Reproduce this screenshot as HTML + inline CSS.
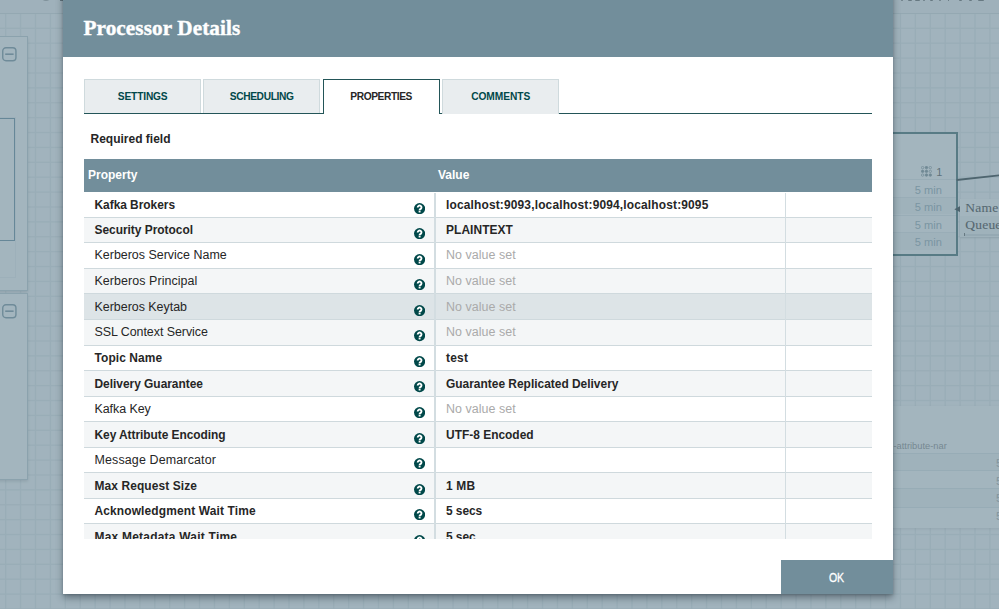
<!DOCTYPE html>
<html><head><meta charset="utf-8">
<style>
*{margin:0;padding:0;box-sizing:border-box}
html,body{width:999px;height:609px;overflow:hidden}
body{position:relative;background:#f9fafb;font-family:"Liberation Sans",sans-serif}
/* background canvas */
#canvas{position:absolute;left:0;top:0;width:999px;height:609px;overflow:hidden}
#grid{position:absolute;left:0;top:0;width:999px;height:609px;
 background-image:linear-gradient(to right, #e3e8eb 1.4px, transparent 1.4px),linear-gradient(to bottom, #e3e8eb 1.4px, transparent 1.4px);
 background-size:14.9px 14.9px;background-position:5.0px 13.0px}
#topbar{position:absolute;left:0;top:0;width:999px;height:13.9px;background:#f2f4f5;border-bottom:1px solid #d3dadd}
#toptext{position:absolute;left:897px;top:-14.5px;font-size:15px;color:#333;letter-spacing:2.6px;white-space:nowrap}
.panel{position:absolute;background:#fff;border:1.2px solid #b9c8cf;box-shadow:0 1.5px 3px rgba(0,0,0,.2)}
.minus{position:absolute;left:2.5px;width:14.8px;height:14.5px;border:2px solid #6c8896;border-radius:3.5px}
.minus:after{content:"";position:absolute;left:2px;right:2px;top:4.6px;height:1.8px;background:#5f7d8b}
#bird{position:absolute;left:-5px;top:117.4px;width:20.5px;height:161px;border:1px solid #eef1f2}
#birdv{position:absolute;left:-5px;top:118.4px;width:19.9px;height:122.6px;border:1.2px solid #527c92;border-left:none}
#pg{position:absolute;left:800px;top:131.8px;width:157.6px;height:124.6px;background:#fff;border:2px solid #285a5c}
.pgrow{position:absolute;left:0;width:154px;height:17.6px;border-top:1px solid #e3e8eb;font-size:11.1px;color:#8aa4ae;text-align:right;padding-right:14.2px;line-height:18.6px}
#pgicon{position:absolute;left:920.5px;top:165.8px}
#pg1{position:absolute;left:936.3px;top:165.6px;font-size:11px;color:#3a3a3a}
#conn{position:absolute;left:0;top:0}
#lbl{position:absolute;left:959.5px;top:198.8px;width:60px;height:37.8px;background:#fff;box-shadow:0 1px 2px rgba(0,0,0,.2)}
.lt{position:absolute;left:5.8px;font-family:"Liberation Serif",serif;font-size:13.5px;color:#1a1a1a;white-space:nowrap;-webkit-text-stroke:0.12px #262626;letter-spacing:0.2px}
#proc{position:absolute;left:860px;top:406.4px;width:160px;height:121.2px;background:#fff;box-shadow:0 1px 3px rgba(0,0,0,.15)}
.prow{position:absolute;left:0;width:160px;border-top:1px solid #dde4e7}
#glass{position:absolute;left:0;top:0;width:999px;height:609px;background:rgba(114,142,155,.65)}
/* dialog */
#dlg{position:absolute;left:63px;top:-10px;width:830.3px;height:603.8px;background:#fff;box-shadow:0 4px 7px rgba(20,32,40,.42), 0 1px 2px rgba(20,32,40,.15)}
#hdr{position:absolute;left:63px;top:0;width:830.3px;height:57.3px;background:#728e9b}
#title{position:absolute;left:83.5px;top:16px;font-family:"Liberation Serif",serif;font-weight:bold;font-size:21.2px;color:#fff;white-space:nowrap;-webkit-text-stroke:0.4px #fff;letter-spacing:0.1px}
.tab{position:absolute;top:79px;height:34.5px;width:117.3px;background:#e9edef;border:1px solid #cfdadd;border-bottom:none;color:#004849;font-weight:bold;font-size:10.2px;text-align:center;line-height:33px}
.tab.sel{background:#fff;border:1.5px solid #235558;border-bottom:none;color:#262626;height:35px}
#tabline{position:absolute;left:84px;top:112.5px;width:788px;height:1.5px;background:#235558}
#req{position:absolute;left:90.5px;top:132px;font-weight:bold;font-size:12px;color:#262626;white-space:nowrap}
#thead{position:absolute;left:84px;top:158.7px;width:788px;height:34.2px;background:#728e9b;color:#fff;font-weight:bold;font-size:12px}
#thead span{position:absolute;top:9.5px}
#tbody{position:absolute;left:84px;top:192.3px;width:788px;height:346.3px;overflow:hidden}
.row{position:absolute;left:0;width:788px;height:25.55px;background:#fff;border-bottom:1px solid #cfd9dd}
.row.alt{background:#f4f6f7}
.row.hov{background:#dde4e7}
.pn,.pv{position:absolute;top:5.1px;font-size:12.45px;color:#262626;white-space:nowrap}
.pn{left:10.5px}
.pv{left:362px}
.b{font-weight:bold;font-size:11.95px;top:5.5px}
.nv{color:#aaa}
.q{position:absolute}
#col1{position:absolute;left:434.4px;top:192.8px;width:1.3px;height:345.8px;background:#d3dde1}
#col2{position:absolute;left:785px;top:192.8px;width:1.3px;height:345.8px;background:#d3dde1}
#ok{position:absolute;left:781px;top:560px;width:112.3px;height:33.8px;background:#728e9b;color:#fff;font-size:12px;letter-spacing:-0.3px;text-align:center;line-height:35px;-webkit-text-stroke:0.3px #fff}
</style></head><body>
<div id="canvas">
<svg id="gridsvg" width="999" height="609" style="position:absolute;left:0;top:0"><rect x="4.96" y="0" width="1.4" height="609" fill="#e3e8eb"/><rect x="19.87" y="0" width="1.4" height="609" fill="#e3e8eb"/><rect x="34.79" y="0" width="1.4" height="609" fill="#e3e8eb"/><rect x="49.70" y="0" width="1.4" height="609" fill="#e3e8eb"/><rect x="64.61" y="0" width="1.4" height="609" fill="#e3e8eb"/><rect x="79.52" y="0" width="1.4" height="609" fill="#e3e8eb"/><rect x="94.44" y="0" width="1.4" height="609" fill="#e3e8eb"/><rect x="109.35" y="0" width="1.4" height="609" fill="#e3e8eb"/><rect x="124.26" y="0" width="1.4" height="609" fill="#e3e8eb"/><rect x="139.18" y="0" width="1.4" height="609" fill="#e3e8eb"/><rect x="154.09" y="0" width="1.4" height="609" fill="#e3e8eb"/><rect x="169.00" y="0" width="1.4" height="609" fill="#e3e8eb"/><rect x="183.92" y="0" width="1.4" height="609" fill="#e3e8eb"/><rect x="198.83" y="0" width="1.4" height="609" fill="#e3e8eb"/><rect x="213.74" y="0" width="1.4" height="609" fill="#e3e8eb"/><rect x="228.66" y="0" width="1.4" height="609" fill="#e3e8eb"/><rect x="243.57" y="0" width="1.4" height="609" fill="#e3e8eb"/><rect x="258.48" y="0" width="1.4" height="609" fill="#e3e8eb"/><rect x="273.39" y="0" width="1.4" height="609" fill="#e3e8eb"/><rect x="288.31" y="0" width="1.4" height="609" fill="#e3e8eb"/><rect x="303.22" y="0" width="1.4" height="609" fill="#e3e8eb"/><rect x="318.13" y="0" width="1.4" height="609" fill="#e3e8eb"/><rect x="333.05" y="0" width="1.4" height="609" fill="#e3e8eb"/><rect x="347.96" y="0" width="1.4" height="609" fill="#e3e8eb"/><rect x="362.87" y="0" width="1.4" height="609" fill="#e3e8eb"/><rect x="377.79" y="0" width="1.4" height="609" fill="#e3e8eb"/><rect x="392.70" y="0" width="1.4" height="609" fill="#e3e8eb"/><rect x="407.61" y="0" width="1.4" height="609" fill="#e3e8eb"/><rect x="422.52" y="0" width="1.4" height="609" fill="#e3e8eb"/><rect x="437.44" y="0" width="1.4" height="609" fill="#e3e8eb"/><rect x="452.35" y="0" width="1.4" height="609" fill="#e3e8eb"/><rect x="467.26" y="0" width="1.4" height="609" fill="#e3e8eb"/><rect x="482.18" y="0" width="1.4" height="609" fill="#e3e8eb"/><rect x="497.09" y="0" width="1.4" height="609" fill="#e3e8eb"/><rect x="512.00" y="0" width="1.4" height="609" fill="#e3e8eb"/><rect x="526.91" y="0" width="1.4" height="609" fill="#e3e8eb"/><rect x="541.83" y="0" width="1.4" height="609" fill="#e3e8eb"/><rect x="556.74" y="0" width="1.4" height="609" fill="#e3e8eb"/><rect x="571.65" y="0" width="1.4" height="609" fill="#e3e8eb"/><rect x="586.57" y="0" width="1.4" height="609" fill="#e3e8eb"/><rect x="601.48" y="0" width="1.4" height="609" fill="#e3e8eb"/><rect x="616.39" y="0" width="1.4" height="609" fill="#e3e8eb"/><rect x="631.31" y="0" width="1.4" height="609" fill="#e3e8eb"/><rect x="646.22" y="0" width="1.4" height="609" fill="#e3e8eb"/><rect x="661.13" y="0" width="1.4" height="609" fill="#e3e8eb"/><rect x="676.04" y="0" width="1.4" height="609" fill="#e3e8eb"/><rect x="690.96" y="0" width="1.4" height="609" fill="#e3e8eb"/><rect x="705.87" y="0" width="1.4" height="609" fill="#e3e8eb"/><rect x="720.78" y="0" width="1.4" height="609" fill="#e3e8eb"/><rect x="735.70" y="0" width="1.4" height="609" fill="#e3e8eb"/><rect x="750.61" y="0" width="1.4" height="609" fill="#e3e8eb"/><rect x="765.52" y="0" width="1.4" height="609" fill="#e3e8eb"/><rect x="780.44" y="0" width="1.4" height="609" fill="#e3e8eb"/><rect x="795.35" y="0" width="1.4" height="609" fill="#e3e8eb"/><rect x="810.26" y="0" width="1.4" height="609" fill="#e3e8eb"/><rect x="825.17" y="0" width="1.4" height="609" fill="#e3e8eb"/><rect x="840.09" y="0" width="1.4" height="609" fill="#e3e8eb"/><rect x="855.00" y="0" width="1.4" height="609" fill="#e3e8eb"/><rect x="869.91" y="0" width="1.4" height="609" fill="#e3e8eb"/><rect x="884.83" y="0" width="1.4" height="609" fill="#e3e8eb"/><rect x="899.74" y="0" width="1.4" height="609" fill="#e3e8eb"/><rect x="914.65" y="0" width="1.4" height="609" fill="#e3e8eb"/><rect x="929.57" y="0" width="1.4" height="609" fill="#e3e8eb"/><rect x="944.48" y="0" width="1.4" height="609" fill="#e3e8eb"/><rect x="959.39" y="0" width="1.4" height="609" fill="#e3e8eb"/><rect x="974.30" y="0" width="1.4" height="609" fill="#e3e8eb"/><rect x="989.22" y="0" width="1.4" height="609" fill="#e3e8eb"/><rect x="0" y="12.72" width="999" height="1.4" fill="#e3e8eb"/><rect x="0" y="27.61" width="999" height="1.4" fill="#e3e8eb"/><rect x="0" y="42.50" width="999" height="1.4" fill="#e3e8eb"/><rect x="0" y="57.39" width="999" height="1.4" fill="#e3e8eb"/><rect x="0" y="72.28" width="999" height="1.4" fill="#e3e8eb"/><rect x="0" y="87.16" width="999" height="1.4" fill="#e3e8eb"/><rect x="0" y="102.05" width="999" height="1.4" fill="#e3e8eb"/><rect x="0" y="116.94" width="999" height="1.4" fill="#e3e8eb"/><rect x="0" y="131.83" width="999" height="1.4" fill="#e3e8eb"/><rect x="0" y="146.72" width="999" height="1.4" fill="#e3e8eb"/><rect x="0" y="161.61" width="999" height="1.4" fill="#e3e8eb"/><rect x="0" y="176.50" width="999" height="1.4" fill="#e3e8eb"/><rect x="0" y="191.39" width="999" height="1.4" fill="#e3e8eb"/><rect x="0" y="206.28" width="999" height="1.4" fill="#e3e8eb"/><rect x="0" y="221.17" width="999" height="1.4" fill="#e3e8eb"/><rect x="0" y="236.05" width="999" height="1.4" fill="#e3e8eb"/><rect x="0" y="250.94" width="999" height="1.4" fill="#e3e8eb"/><rect x="0" y="265.83" width="999" height="1.4" fill="#e3e8eb"/><rect x="0" y="280.72" width="999" height="1.4" fill="#e3e8eb"/><rect x="0" y="295.61" width="999" height="1.4" fill="#e3e8eb"/><rect x="0" y="310.50" width="999" height="1.4" fill="#e3e8eb"/><rect x="0" y="325.39" width="999" height="1.4" fill="#e3e8eb"/><rect x="0" y="340.28" width="999" height="1.4" fill="#e3e8eb"/><rect x="0" y="355.17" width="999" height="1.4" fill="#e3e8eb"/><rect x="0" y="370.06" width="999" height="1.4" fill="#e3e8eb"/><rect x="0" y="384.94" width="999" height="1.4" fill="#e3e8eb"/><rect x="0" y="399.83" width="999" height="1.4" fill="#e3e8eb"/><rect x="0" y="414.72" width="999" height="1.4" fill="#e3e8eb"/><rect x="0" y="429.61" width="999" height="1.4" fill="#e3e8eb"/><rect x="0" y="444.50" width="999" height="1.4" fill="#e3e8eb"/><rect x="0" y="459.39" width="999" height="1.4" fill="#e3e8eb"/><rect x="0" y="474.28" width="999" height="1.4" fill="#e3e8eb"/><rect x="0" y="489.17" width="999" height="1.4" fill="#e3e8eb"/><rect x="0" y="504.06" width="999" height="1.4" fill="#e3e8eb"/><rect x="0" y="518.95" width="999" height="1.4" fill="#e3e8eb"/><rect x="0" y="533.83" width="999" height="1.4" fill="#e3e8eb"/><rect x="0" y="548.72" width="999" height="1.4" fill="#e3e8eb"/><rect x="0" y="563.61" width="999" height="1.4" fill="#e3e8eb"/><rect x="0" y="578.50" width="999" height="1.4" fill="#e3e8eb"/><rect x="0" y="593.39" width="999" height="1.4" fill="#e3e8eb"/><rect x="0" y="608.28" width="999" height="1.4" fill="#e3e8eb"/></svg>
<div id="topbar"></div><div style="position:absolute;left:39.5px;top:-11.6px;width:12.5px;height:13px;border:1px solid #999;border-radius:50%"></div><div style="position:absolute;left:60px;top:-1px;width:3px;height:2px;background:#444"></div><div style="position:absolute;left:901.3px;top:-0.6px;width:1.7000000000000455px;height:1.8px;background:#555;border-radius:1px"></div><div style="position:absolute;left:908px;top:-0.6px;width:4px;height:1.8px;background:#555;border-radius:1px"></div><div style="position:absolute;left:914.5px;top:-0.6px;width:5.0px;height:1.8px;background:#555;border-radius:1px"></div><div style="position:absolute;left:922.7px;top:-0.6px;width:2.2999999999999545px;height:1.8px;background:#555;border-radius:1px"></div><div style="position:absolute;left:930px;top:-0.6px;width:2.5px;height:1.8px;background:#555;border-radius:1px"></div><div style="position:absolute;left:939px;top:-0.6px;width:2px;height:1.8px;background:#555;border-radius:1px"></div><div style="position:absolute;left:947.8px;top:-0.6px;width:1.6000000000000227px;height:1.8px;background:#555;border-radius:1px"></div><div style="position:absolute;left:958.7px;top:-0.6px;width:3.7999999999999545px;height:1.8px;background:#555;border-radius:1px"></div><div style="position:absolute;left:968.5px;top:-0.6px;width:3.2999999999999545px;height:1.8px;background:#555;border-radius:1px"></div><div style="position:absolute;left:978px;top:-0.6px;width:6px;height:1.8px;background:#555;border-radius:1px"></div>
<div class="panel" style="left:-5px;top:36.4px;width:33.1px;height:254.2px"><svg style="position:absolute;left:6.3px;top:9.7px" width="15" height="15" viewBox="0 0 15 15"><rect x="0.75" y="0.75" width="13.2" height="13" rx="3.2" fill="none" stroke="#6a8795" stroke-width="1.4"/><rect x="3.2" y="6.4" width="8.4" height="1.6" fill="#6a8795"/></svg></div>
<div id="bird"></div>
<div id="birdv"></div>
<div class="panel" style="left:-5px;top:293px;width:33.1px;height:187px"><svg style="position:absolute;left:6.3px;top:9.5px" width="15" height="15" viewBox="0 0 15 15"><rect x="0.75" y="0.75" width="13.2" height="13" rx="3.2" fill="none" stroke="#6a8795" stroke-width="1.4"/><rect x="3.2" y="6.4" width="8.4" height="1.6" fill="#6a8795"/></svg></div>
<div id="pg">
 <div class="pgrow" style="top:45.4px;background:#fff;line-height:20.3px">5 min</div>
 <div class="pgrow" style="top:63px;background:#f4f6f7">5 min</div>
 <div class="pgrow" style="top:80.9px;background:#fff">5 min</div>
 <div class="pgrow" style="top:98.4px;background:#f4f6f7">5 min</div>
</div>
<svg id="pgicon" width="11.5" height="11" viewBox="0 0 11.5 11"><circle cx="1.60" cy="1.60" r="1.2" fill="none" stroke="#6b7f88" stroke-width="0.7"/><circle cx="5.45" cy="1.60" r="1.25" fill="#6b7f88" stroke="#6b7f88" stroke-width="0.7"/><circle cx="9.30" cy="1.60" r="1.2" fill="none" stroke="#6b7f88" stroke-width="0.7"/><circle cx="1.60" cy="5.35" r="1.25" fill="#6b7f88" stroke="#6b7f88" stroke-width="0.7"/><circle cx="5.45" cy="5.35" r="1.25" fill="#6b7f88" stroke="#6b7f88" stroke-width="0.7"/><circle cx="9.30" cy="5.35" r="1.2" fill="none" stroke="#6b7f88" stroke-width="0.7"/><circle cx="1.60" cy="9.10" r="1.2" fill="none" stroke="#6b7f88" stroke-width="0.7"/><circle cx="5.45" cy="9.10" r="1.25" fill="#6b7f88" stroke="#6b7f88" stroke-width="0.7"/><circle cx="9.30" cy="9.10" r="1.25" fill="#6b7f88" stroke="#6b7f88" stroke-width="0.7"/></svg>
<div id="pg1">1</div>
<svg id="conn" width="999" height="609"><line x1="956.6" y1="180" x2="1000" y2="175.3" stroke="#0e1a1e" stroke-width="1.8"/><path d="M954.3 209.3 L960.8 205.8 L960.8 212.6 Z" fill="#0e1a1e"/></svg>
<div id="lbl"><div style="position:absolute;left:0;top:17.5px;width:60px;height:20.3px;background:#f4f6f7"></div><div class="lt" style="top:1px">Name</div><div class="lt" style="top:18.2px">Queue</div><div style="position:absolute;left:5px;top:35.3px;width:60px;height:1.6px;background:#d6dde0"></div><div style="position:absolute;left:4.6px;top:34.4px;width:1.2px;height:2.6px;background:#555"></div></div>
<div id="proc">
 <div style="position:absolute;left:33.5px;top:34.2px;font-size:9.3px;color:#7d7d7d;white-space:nowrap">-attribute-nar</div>
 <div class="prow" style="top:46.9px;height:16.7px;background:#f4f6f7"></div>
 <div class="prow" style="top:63.6px;height:18.5px;background:#fff"></div>
 <div class="prow" style="top:82.1px;height:18.5px;background:#f4f6f7"></div>
 <div class="prow" style="top:100.6px;height:20.6px;background:#fff"></div>
 <div style="position:absolute;left:136px;top:49px;font-size:11.5px;color:#a1a1a1;line-height:17.5px">5<br>5<br>5<br>5</div>
</div>
</div>
<div id="glass"></div>
<div id="dlg"></div>
<div id="hdr"></div>
<div id="title">Processor Details</div>
<div class="tab" style="left:84px;letter-spacing:-0.15px">SETTINGS</div>
<div class="tab" style="left:203px;letter-spacing:-0.35px">SCHEDULING</div>
<div id="tabline"></div>
<div class="tab sel" style="left:322.5px;letter-spacing:-0.4px">PROPERTIES</div>
<div class="tab" style="left:442px;letter-spacing:-0.05px">COMMENTS</div>
<div id="req">Required field</div>
<div id="thead"><span style="left:4px">Property</span><span style="left:354px">Value</span></div>
<div id="tbody">
<div class="row" style="top:0.00px"><div class="pn b" style="letter-spacing:-0.036px">Kafka Brokers</div><div class="pv b" style="letter-spacing:0.16px">localhost:9093,localhost:9094,localhost:9095</div></div>
<svg class="q" style="left:329.50px;top:10.30px" width="11.2" height="11.2" viewBox="0 0 16 16"><circle cx="8" cy="8" r="8" fill="#004849"/><path d="M5.3 6.4 A2.7 2.7 0 1 1 10.1 8 L9 8.8 Q8 9.4 8 10.3" fill="none" stroke="#fff" stroke-width="2.7"/><rect x="6.65" y="11" width="2.7" height="2.5" fill="#fff"/></svg>
<div class="row alt" style="top:25.55px"><div class="pn b" style="letter-spacing:-0.022px">Security Protocol</div><div class="pv b" style="letter-spacing:0.063px">PLAINTEXT</div></div>
<svg class="q" style="left:329.50px;top:35.85px" width="11.2" height="11.2" viewBox="0 0 16 16"><circle cx="8" cy="8" r="8" fill="#004849"/><path d="M5.3 6.4 A2.7 2.7 0 1 1 10.1 8 L9 8.8 Q8 9.4 8 10.3" fill="none" stroke="#fff" stroke-width="2.7"/><rect x="6.65" y="11" width="2.7" height="2.5" fill="#fff"/></svg>
<div class="row" style="top:51.10px"><div class="pn" style="letter-spacing:0.007px">Kerberos Service Name</div><div class="pv nv" style="letter-spacing:0.045px">No value set</div></div>
<svg class="q" style="left:329.50px;top:61.40px" width="11.2" height="11.2" viewBox="0 0 16 16"><circle cx="8" cy="8" r="8" fill="#004849"/><path d="M5.3 6.4 A2.7 2.7 0 1 1 10.1 8 L9 8.8 Q8 9.4 8 10.3" fill="none" stroke="#fff" stroke-width="2.7"/><rect x="6.65" y="11" width="2.7" height="2.5" fill="#fff"/></svg>
<div class="row alt" style="top:76.65px"><div class="pn" style="letter-spacing:0.07px">Kerberos Principal</div><div class="pv nv" style="letter-spacing:0.045px">No value set</div></div>
<svg class="q" style="left:329.50px;top:86.95px" width="11.2" height="11.2" viewBox="0 0 16 16"><circle cx="8" cy="8" r="8" fill="#004849"/><path d="M5.3 6.4 A2.7 2.7 0 1 1 10.1 8 L9 8.8 Q8 9.4 8 10.3" fill="none" stroke="#fff" stroke-width="2.7"/><rect x="6.65" y="11" width="2.7" height="2.5" fill="#fff"/></svg>
<div class="row hov" style="top:102.20px"><div class="pn" style="letter-spacing:-0.01px">Kerberos Keytab</div><div class="pv nv" style="letter-spacing:0.045px">No value set</div></div>
<svg class="q" style="left:329.50px;top:112.50px" width="11.2" height="11.2" viewBox="0 0 16 16"><circle cx="8" cy="8" r="8" fill="#004849"/><path d="M5.3 6.4 A2.7 2.7 0 1 1 10.1 8 L9 8.8 Q8 9.4 8 10.3" fill="none" stroke="#fff" stroke-width="2.7"/><rect x="6.65" y="11" width="2.7" height="2.5" fill="#fff"/></svg>
<div class="row alt" style="top:127.75px"><div class="pn" style="letter-spacing:-0.051px">SSL Context Service</div><div class="pv nv" style="letter-spacing:0.045px">No value set</div></div>
<svg class="q" style="left:329.50px;top:138.05px" width="11.2" height="11.2" viewBox="0 0 16 16"><circle cx="8" cy="8" r="8" fill="#004849"/><path d="M5.3 6.4 A2.7 2.7 0 1 1 10.1 8 L9 8.8 Q8 9.4 8 10.3" fill="none" stroke="#fff" stroke-width="2.7"/><rect x="6.65" y="11" width="2.7" height="2.5" fill="#fff"/></svg>
<div class="row" style="top:153.30px"><div class="pn b" style="letter-spacing:0.095px">Topic Name</div><div class="pv b" style="letter-spacing:0.251px">test</div></div>
<svg class="q" style="left:329.50px;top:163.60px" width="11.2" height="11.2" viewBox="0 0 16 16"><circle cx="8" cy="8" r="8" fill="#004849"/><path d="M5.3 6.4 A2.7 2.7 0 1 1 10.1 8 L9 8.8 Q8 9.4 8 10.3" fill="none" stroke="#fff" stroke-width="2.7"/><rect x="6.65" y="11" width="2.7" height="2.5" fill="#fff"/></svg>
<div class="row alt" style="top:178.85px"><div class="pn b" style="letter-spacing:-0.02px">Delivery Guarantee</div><div class="pv b" style="letter-spacing:-0.003px">Guarantee Replicated Delivery</div></div>
<svg class="q" style="left:329.50px;top:189.15px" width="11.2" height="11.2" viewBox="0 0 16 16"><circle cx="8" cy="8" r="8" fill="#004849"/><path d="M5.3 6.4 A2.7 2.7 0 1 1 10.1 8 L9 8.8 Q8 9.4 8 10.3" fill="none" stroke="#fff" stroke-width="2.7"/><rect x="6.65" y="11" width="2.7" height="2.5" fill="#fff"/></svg>
<div class="row" style="top:204.40px"><div class="pn" style="letter-spacing:-0.056px">Kafka Key</div><div class="pv nv" style="letter-spacing:0.045px">No value set</div></div>
<svg class="q" style="left:329.50px;top:214.70px" width="11.2" height="11.2" viewBox="0 0 16 16"><circle cx="8" cy="8" r="8" fill="#004849"/><path d="M5.3 6.4 A2.7 2.7 0 1 1 10.1 8 L9 8.8 Q8 9.4 8 10.3" fill="none" stroke="#fff" stroke-width="2.7"/><rect x="6.65" y="11" width="2.7" height="2.5" fill="#fff"/></svg>
<div class="row alt" style="top:229.95px"><div class="pn b" style="letter-spacing:-0.054px">Key Attribute Encoding</div><div class="pv b" style="letter-spacing:0.005px">UTF-8 Encoded</div></div>
<svg class="q" style="left:329.50px;top:240.25px" width="11.2" height="11.2" viewBox="0 0 16 16"><circle cx="8" cy="8" r="8" fill="#004849"/><path d="M5.3 6.4 A2.7 2.7 0 1 1 10.1 8 L9 8.8 Q8 9.4 8 10.3" fill="none" stroke="#fff" stroke-width="2.7"/><rect x="6.65" y="11" width="2.7" height="2.5" fill="#fff"/></svg>
<div class="row" style="top:255.50px"><div class="pn" style="letter-spacing:0.146px">Message Demarcator</div><div class="pv" style="letter-spacing:0px"></div></div>
<svg class="q" style="left:329.50px;top:265.80px" width="11.2" height="11.2" viewBox="0 0 16 16"><circle cx="8" cy="8" r="8" fill="#004849"/><path d="M5.3 6.4 A2.7 2.7 0 1 1 10.1 8 L9 8.8 Q8 9.4 8 10.3" fill="none" stroke="#fff" stroke-width="2.7"/><rect x="6.65" y="11" width="2.7" height="2.5" fill="#fff"/></svg>
<div class="row alt" style="top:281.05px"><div class="pn b" style="letter-spacing:0.111px">Max Request Size</div><div class="pv b" style="letter-spacing:0.184px">1 MB</div></div>
<svg class="q" style="left:329.50px;top:291.35px" width="11.2" height="11.2" viewBox="0 0 16 16"><circle cx="8" cy="8" r="8" fill="#004849"/><path d="M5.3 6.4 A2.7 2.7 0 1 1 10.1 8 L9 8.8 Q8 9.4 8 10.3" fill="none" stroke="#fff" stroke-width="2.7"/><rect x="6.65" y="11" width="2.7" height="2.5" fill="#fff"/></svg>
<div class="row" style="top:306.60px"><div class="pn b" style="letter-spacing:0.138px">Acknowledgment Wait Time</div><div class="pv b" style="letter-spacing:-0.051px">5 secs</div></div>
<svg class="q" style="left:329.50px;top:316.90px" width="11.2" height="11.2" viewBox="0 0 16 16"><circle cx="8" cy="8" r="8" fill="#004849"/><path d="M5.3 6.4 A2.7 2.7 0 1 1 10.1 8 L9 8.8 Q8 9.4 8 10.3" fill="none" stroke="#fff" stroke-width="2.7"/><rect x="6.65" y="11" width="2.7" height="2.5" fill="#fff"/></svg>
<div class="row alt" style="top:332.15px"><div class="pn b" style="letter-spacing:0.245px">Max Metadata Wait Time</div><div class="pv b" style="letter-spacing:-0.05px">5 sec</div></div>
<svg class="q" style="left:329.50px;top:342.45px" width="11.2" height="11.2" viewBox="0 0 16 16"><circle cx="8" cy="8" r="8" fill="#004849"/><path d="M5.3 6.4 A2.7 2.7 0 1 1 10.1 8 L9 8.8 Q8 9.4 8 10.3" fill="none" stroke="#fff" stroke-width="2.7"/><rect x="6.65" y="11" width="2.7" height="2.5" fill="#fff"/></svg>
</div>
<div id="col1"></div>
<div id="col2"></div>
<div id="ok"><span style="display:inline-block;position:relative;top:1px;left:-0.5px;transform:scaleX(0.88);transform-origin:50% 50%">OK</span></div>
</body></html>
